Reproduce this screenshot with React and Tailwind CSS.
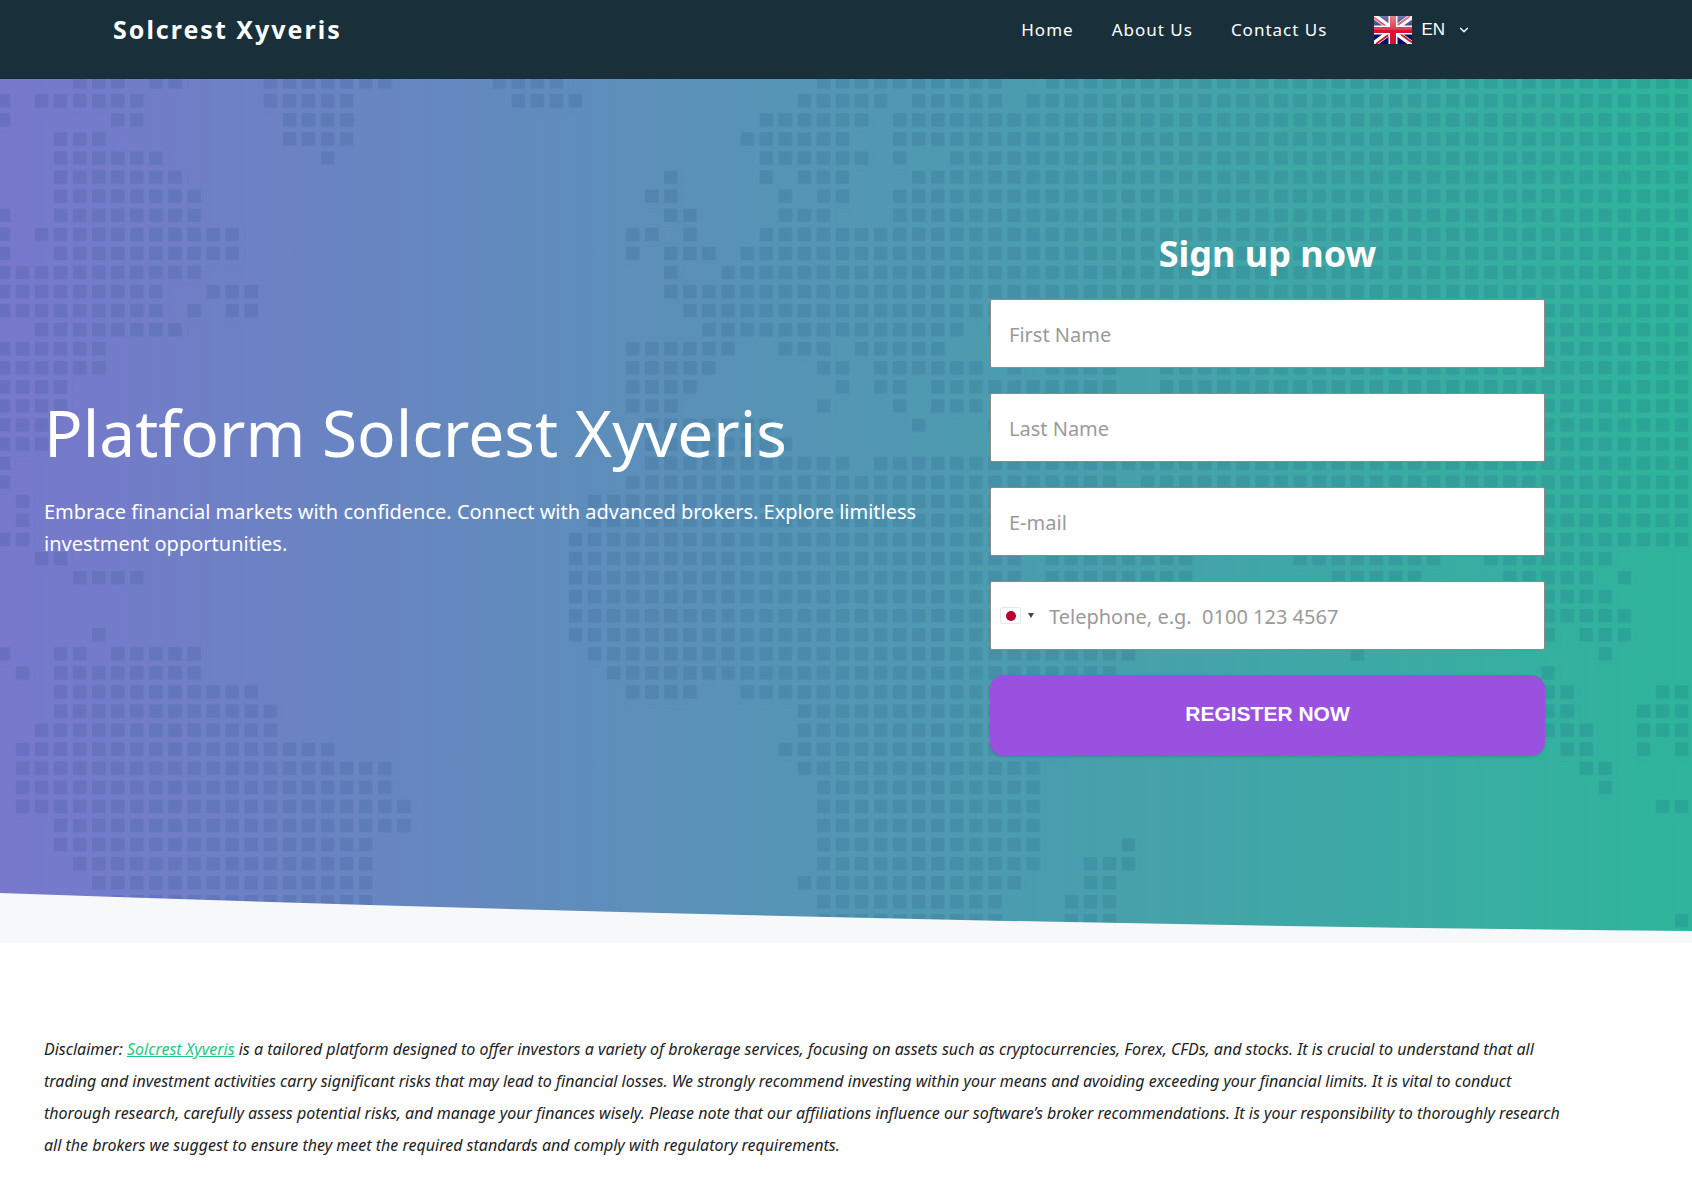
import React, { useState } from 'react';
import { ChevronDown } from 'lucide-react';

const CELL = 19.07;

// One entry per row of the dotted world map, each run is [first column, last column]
const mapRows = [
  [[4, 6], [8, 9], [14, 20], [26, 29], [43, 52], [55, 88]],
  [[0, 0], [2, 7], [14, 18], [27, 30], [42, 46], [48, 52], [54, 88]],
  [[0, 0], [6, 7], [15, 18], [40, 45], [47, 88]],
  [[3, 5], [15, 18], [39, 44], [47, 88]],
  [[3, 8], [17, 17], [40, 45], [47, 47], [50, 88]],
  [[3, 9], [35, 35], [40, 40], [42, 44], [48, 88]],
  [[3, 10], [34, 35], [41, 41], [43, 44], [47, 88]],
  [[0, 0], [3, 10], [35, 36], [41, 43], [47, 88]],
  [[0, 0], [2, 12], [33, 34], [36, 36], [40, 88]],
  [[0, 0], [3, 12], [33, 33], [35, 37], [39, 88]],
  [[0, 10], [35, 35], [38, 88]],
  [[0, 8], [11, 13], [35, 88]],
  [[0, 8], [10, 10], [12, 13], [36, 88]],
  [[2, 9], [37, 50], [52, 88]],
  [[0, 5], [33, 38], [41, 43], [45, 49], [53, 88]],
  [[0, 5], [33, 37], [43, 44], [46, 51], [53, 53], [55, 58], [61, 88]],
  [[0, 3], [33, 36], [44, 44], [46, 47], [49, 58], [61, 88]],
  [[0, 3], [33, 35], [43, 43], [47, 47], [49, 51], [53, 88]],
  [[0, 2], [34, 40], [48, 48], [52, 88]],
  [[0, 2], [34, 41], [53, 88]],
  [[0, 0], [34, 44], [46, 88]],
  [[0, 0], [33, 58], [60, 88]],
  [[1, 1], [31, 88]],
  [[1, 1], [31, 88]],
  [[0, 1], [30, 88]],
  [[2, 3], [30, 53], [55, 62], [68, 75], [78, 84]],
  [[4, 7], [30, 53], [55, 62], [70, 74], [79, 83], [85, 85]],
  [[30, 60], [81, 84]],
  [[30, 60], [81, 85]],
  [[5, 5], [30, 60], [81, 81], [83, 85]],
  [[0, 0], [3, 4], [6, 10], [31, 59], [71, 71], [84, 84]],
  [[1, 1], [3, 10], [32, 58], [81, 81]],
  [[3, 13], [33, 36], [39, 57], [81, 82], [87, 88]],
  [[3, 14], [42, 56], [81, 82], [86, 88]],
  [[2, 14], [42, 56], [81, 83], [86, 88]],
  [[1, 17], [41, 55], [82, 83], [86, 86], [88, 88]],
  [[1, 20], [42, 54], [83, 84]],
  [[1, 20], [43, 54], [84, 84]],
  [[1, 21], [43, 54], [87, 88]],
  [[3, 21], [43, 54]],
  [[3, 19], [43, 54], [59, 59]],
  [[4, 19], [43, 54], [57, 59]],
  [[5, 19], [42, 53], [57, 58]],
  [[6, 19], [43, 52], [56, 58]],
  [[43, 52], [56, 58], [88, 88]],
];

const WorldMap = () => (
  <svg
    className="absolute inset-0 w-full h-full"
    viewBox="0 0 1692 864"
    preserveAspectRatio="xMidYMin slice"
    aria-hidden="true"
  >
    <defs>
      <pattern id="map-dot" width={CELL} height={CELL} patternUnits="userSpaceOnUse">
        <rect width="13.6" height="13.6" rx="0.6" fill="#0a3a70" fillOpacity="0.12" />
      </pattern>
    </defs>
    <g transform="translate(-3.4 -4)">
      {mapRows.map((runs, row) =>
        runs.map(([from, to]) => (
          <rect
            key={`${row}-${from}`}
            x={from * CELL}
            y={row * CELL}
            width={(to - from + 1) * CELL}
            height={CELL}
            fill="url(#map-dot)"
          />
        ))
      )}
    </g>
  </svg>
);

const FlagUK = () => (
  <svg className="w-[38px] h-7" viewBox="0 0 38 28" aria-hidden="true">
    <defs>
      <linearGradient id="gloss" x1="0" y1="0" x2="0" y2="1">
        <stop offset="0" stopColor="#fff" stopOpacity="0.45" />
        <stop offset="0.5" stopColor="#fff" stopOpacity="0.15" />
        <stop offset="0.5" stopColor="#fff" stopOpacity="0" />
      </linearGradient>
    </defs>
    <rect width="38" height="28" fill="#0a0a66" />
    <path d="M0 0L38 28M38 0L0 28" stroke="#fff" strokeWidth="5.6" />
    <path d="M0 1.5L17 14M38 26.5L21 14M36 0L19 12.5M2 28L19 15.5" stroke="#d8122f" strokeWidth="2" />
    <path d="M19 0V28M0 14H38" stroke="#fff" strokeWidth="9" />
    <path d="M19 0V28M0 14H38" stroke="#d8122f" strokeWidth="6" />
    <rect width="38" height="28" fill="url(#gloss)" />
  </svg>
);

const FlagJapan = () => (
  <span className="flex items-center justify-center w-[21px] h-[17px] rounded-xs border border-gray-200 bg-white">
    <span className="w-[10px] h-[10px] rounded-full bg-[#bc002d]" />
  </span>
);

const Header = () => (
  <header className="h-[79px] bg-[#19303b] text-white">
    <div className="flex items-center justify-between h-[59px] max-w-[1589px] pl-[113px] pr-[118px]">
      <a href="#home" className="text-[25px] font-bold tracking-[2px]">Solcrest Xyveris</a>
      <nav className="flex items-center">
        <ul className="flex gap-[38px] text-[17px] tracking-[1px]">
          <li><a href="#home">Home</a></li>
          <li><a href="#about">About Us</a></li>
          <li><a href="#contact">Contact Us</a></li>
        </ul>
        <button type="button" aria-haspopup="true" className="flex items-center ml-[47px] font-['Liberation_Sans',sans-serif] text-[17px]">
          <FlagUK />
          <span className="ml-[9px] font-medium">EN</span>
          <ChevronDown className="ml-3 w-[14px] h-[14px]" strokeWidth={2.2} />
        </button>
      </nav>
    </div>
  </header>
);

const inputClass = 'block w-full h-[69px] rounded-xs border border-[#8a8a8a] bg-white pt-[2px] pr-4 text-[20px] text-gray-800 placeholder:text-[#9a9a9a] outline-none';

const SignUpForm = () => {
  const [form, setForm] = useState({ firstName: '', lastName: '', email: '', phone: '' });

  const handleChange = (e) => setForm({ ...form, [e.target.name]: e.target.value });

  return (
    <form className="w-[555px] shrink-0" onSubmit={(e) => e.preventDefault()}>
      <h2 className="mb-5 text-center text-[36px] leading-[50px] font-bold">Sign up now</h2>
      <div className="flex flex-col gap-[25px]">
        <input className={`${inputClass} pl-[18px]`} name="firstName" aria-label="First Name" placeholder="First Name" value={form.firstName} onChange={handleChange} />
        <input className={`${inputClass} pl-[18px]`} name="lastName" aria-label="Last Name" placeholder="Last Name" value={form.lastName} onChange={handleChange} />
        <input className={`${inputClass} pl-[18px]`} type="email" name="email" aria-label="E-mail" placeholder="E-mail" value={form.email} onChange={handleChange} />
        <div className="relative">
          <button type="button" aria-label="Country code" className="absolute left-[10px] inset-y-0 flex items-center gap-[7px]">
            <FlagJapan />
            <svg className="w-[6px] h-[5px]" viewBox="0 0 6 5" aria-hidden="true"><path d="M0 0H6L3 5Z" fill="#444" /></svg>
          </button>
          <input className={`${inputClass} pl-[58px]`} type="tel" name="phone" aria-label="Telephone" placeholder="Telephone, e.g.&nbsp; 0100 123 4567" value={form.phone} onChange={handleChange} />
        </div>
        <button type="submit" className="h-[81px] pb-1 rounded-[14px] bg-[#9b51e0] shadow-sm font-['Liberation_Sans',sans-serif] text-[21px] font-bold">
          REGISTER NOW
        </button>
      </div>
    </form>
  );
};

const Hero = () => (
  <section className="relative h-[864px] bg-linear-to-r/srgb from-[#7878cc] to-[#2eb59b] text-white">
    <WorldMap />
    <svg className="absolute bottom-0 w-full h-[50px]" viewBox="0 0 1692 50" preserveAspectRatio="none" aria-hidden="true">
      <path d="M0 0Q846 30 1692 38V50H0Z" fill="#f6f8fa" />
    </svg>
    <div className="relative flex items-center justify-between max-w-[1589px] px-11 pt-[150px]">
      <div className="max-w-[880px] pb-[38px]">
        <h1 className="text-[64px] leading-[90px]">Platform Solcrest Xyveris</h1>
        <p className="mt-[18px] text-[20px] leading-8">
          Embrace financial markets with confidence. Connect with advanced brokers. Explore limitless investment opportunities.
        </p>
      </div>
      <SignUpForm />
    </div>
  </section>
);

const Disclaimer = () => (
  <section className="max-w-[1612px] px-11 pt-[90px] pb-8">
    <p className="text-base leading-8 italic text-[#222]">
      Disclaimer: <a href="#home" className="text-[#1fc785] underline">Solcrest Xyveris</a> is a tailored platform designed to offer investors a variety of brokerage services, focusing on assets such as cryptocurrencies, Forex, CFDs, and stocks. It is crucial to understand that all trading and investment activities carry significant risks that may lead to financial losses. We strongly recommend investing within your means and avoiding exceeding your financial limits. It is vital to conduct thorough research, carefully assess potential risks, and manage your finances wisely. Please note that our affiliations influence our software’s broker recommendations. It is your responsibility to thoroughly research all the brokers we suggest to ensure they meet the required standards and comply with regulatory requirements.
    </p>
  </section>
);

export default function App() {
  return (
    <div className="min-h-screen bg-white font-['Noto_Sans',sans-serif]">
      <Header />
      <main>
        <Hero />
        <Disclaimer />
      </main>
    </div>
  );
}
